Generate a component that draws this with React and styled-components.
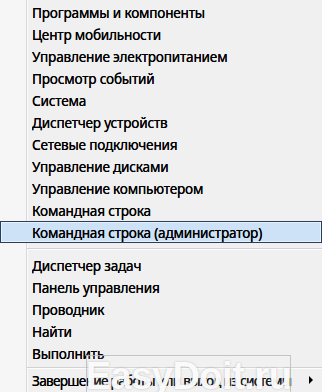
import styled, { createGlobalStyle } from "styled-components";

const GlobalStyle = createGlobalStyle`
  html, body {
    margin: 0;
    padding: 0;
    background: #f0f0f0;
  }
  * { box-sizing: border-box; }
`;

const topItems = [
  "Программы и компоненты",
  "Центр мобильности",
  "Управление электропитанием",
  "Просмотр событий",
  "Система",
  "Диспетчер устройств",
  "Сетевые подключения",
  "Управление дисками",
  "Управление компьютером",
  "Командная строка",
  "Командная строка (администратор)",
];

const midItems = ["Диспетчер задач", "Панель управления", "Проводник", "Найти", "Выполнить"];

const App = () => {
  return (
    <>
      <GlobalStyle />
      <Menu>
        {topItems.map((t, i) => (
          <Item key={t} $active={i === topItems.length - 1}>
            <Label>{t}</Label>
          </Item>
        ))}
        <Separator $h={11} $line={5} />
        {midItems.map((t) => (
          <Item key={t}>
            <Label>{t}</Label>
          </Item>
        ))}
        <Separator $h={5} $line={3} />
        <Item>
          <Label $tight>Завершение работы или выход из системы</Label>
          <Arrow />
        </Item>
        <Watermark>EasyDoit.ru</Watermark>
      </Menu>
    </>
  );
};

const Menu = styled.div`
  position: relative;
  width: 322px;
  height: 392px;
  padding-top: 1px;
  overflow: hidden;
  display: flex;
  flex-direction: column;
  background: linear-gradient(
    to right,
    #f6f6f6 0 26px,
    #d9d9d9 26px 27px,
    #fbfbfb 27px 28px,
    #f0f0f0 28px
  );
  font-family: "Noto Sans", "Open Sans", sans-serif;
  font-size: 13.6px;
  color: #000;
`;

const Item = styled.div`
  height: 22px;
  flex: none;
  display: flex;
  align-items: center;
  padding-left: 31px;
  padding-right: 6px;
  border: 1px solid ${(p) => (p.$active ? "#2a3e5c" : "transparent")};
  background: ${(p) => (p.$active ? "#cde2f6" : "transparent")};
  box-shadow: ${(p) => (p.$active ? "inset 0 0 0 1px #e4f3ff" : "none")};
`;

const Label = styled.span`
  flex: 1;
  white-space: nowrap;
  overflow: hidden;
  letter-spacing: ${(p) => (p.$tight ? "-0.7px" : "-0.2px")};
  text-shadow: 0 0 0.5px #000;
`;

const Separator = styled.div`
  height: ${(p) => p.$h}px;
  flex: none;
  margin-left: 27px;
  padding-top: ${(p) => p.$line}px;
  &::before {
    content: "";
    display: block;
    height: 1px;
    background: #d2d2d2;
    border-bottom: 1px solid #fcfcfc;
  }
`;

const Arrow = styled.span`
  width: 0;
  height: 0;
  margin-right: 2px;
  border-top: 4px solid transparent;
  border-bottom: 4px solid transparent;
  border-left: 4px solid #000;
`;

const Watermark = styled.div`
  position: absolute;
  left: 86px;
  top: 355px;
  width: 205px;
  height: 42px;
  border: 1px solid rgba(185, 185, 185, 0.8);
  background: rgba(255, 255, 255, 0.1);
  display: flex;
  align-items: center;
  justify-content: center;
  font-family: "Liberation Sans", sans-serif;
  font-weight: bold;
  font-size: 38px;
  color: rgba(255, 255, 255, 0.95);
  text-shadow: 0 0 2px rgba(110, 110, 110, 0.45);
  letter-spacing: -0.5px;
`;

export default App;
